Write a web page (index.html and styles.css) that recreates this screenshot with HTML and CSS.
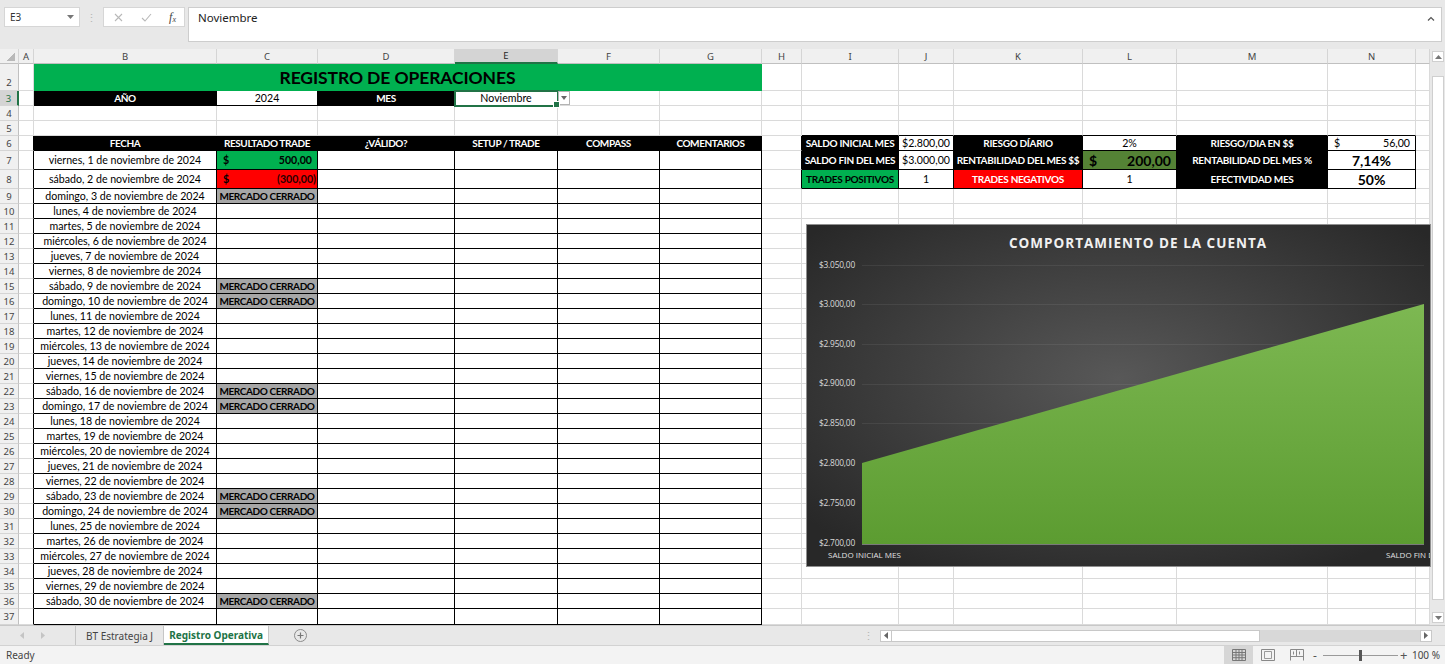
FILE: index.html
```html
<!DOCTYPE html>
<html lang="es">
<head>
<meta charset="utf-8">
<title>Registro Operativa</title>
<link rel="stylesheet" href="styles.css">
</head>
<body>
<div class="app">
  <div class="fbar">
    <div class="namebox"><span>E3</span><svg class="dd" width="7" height="4" viewBox="0 0 7 4"><path d="M0 0h7L3.5 4z" fill="#777"/></svg></div>
    <div class="grip">⋮</div>
    <div class="fxbox">
      <svg width="9" height="9" viewBox="0 0 9 9"><path d="M1 1l7 7M8 1L1 8" stroke="#b8b8b8" stroke-width="1.1" fill="none"/></svg>
      <svg width="11" height="9" viewBox="0 0 11 9"><path d="M1 5l3 3 6-7" stroke="#b8b8b8" stroke-width="1.1" fill="none"/></svg>
      <span class="fx">f<sub>x</sub></span>
    </div>
    <div class="formula"><span>Noviembre</span><svg class="caret" width="8" height="5" viewBox="0 0 8 5"><path d="M1 4.5L4 1.5 7 4.5" stroke="#555" stroke-width="1.2" fill="none"/></svg></div>
  </div>

  <div class="sheetwrap">
    <div class="sheet">
      <!-- column headers -->
      <span class="h corner"></span><span class="h">A</span><span class="h">B</span><span class="h">C</span><span class="h">D</span><span class="h hsel">E</span><span class="h">F</span><span class="h">G</span><span class="h">H</span><span class="h">I</span><span class="h">J</span><span class="h">K</span><span class="h">L</span><span class="h">M</span><span class="h">N</span><span class="h"></span>
      <!-- row 2 -->
      <span class="r rb">2</span><span class="e"></span><span class="title">REGISTRO DE OPERACIONES</span><span class="e"></span><span class="e"></span><span class="e"></span><span class="e"></span><span class="e"></span><span class="e"></span><span class="e"></span><span class="e"></span>
      <!-- row 3 -->
      <span class="r rsel">3</span><span class="e"></span><span class="k">AÑO</span><span class="s">2024</span><span class="k">MES</span><span class="s sel">Noviembre<span class="ddbtn"><svg width="6" height="4" viewBox="0 0 6 4"><path d="M0 0h6L3 4z" fill="#666"/></svg></span></span><span class="e"></span><span class="e"></span><span class="e"></span><span class="e"></span><span class="e"></span><span class="e"></span><span class="e"></span><span class="e"></span><span class="e"></span><span class="e"></span>
      <!-- row 4 -->
      <span class="r">4</span><span class="e"></span><span class="e"></span><span class="e"></span><span class="e"></span><span class="e"></span><span class="e"></span><span class="e"></span><span class="e"></span><span class="e"></span><span class="e"></span><span class="e"></span><span class="e"></span><span class="e"></span><span class="e"></span><span class="e"></span>
      <!-- row 5 -->
      <span class="r">5</span><span class="e"></span><span class="e"></span><span class="e"></span><span class="e"></span><span class="e"></span><span class="e"></span><span class="e"></span><span class="e"></span><span class="e bb"></span><span class="e bb"></span><span class="e bb"></span><span class="e bb"></span><span class="e bb"></span><span class="e bb"></span><span class="e"></span>
      <!-- row 6 -->
      <span class="r">6</span><span class="e ab"></span><span class="k">FECHA</span><span class="k">RESULTADO TRADE</span><span class="k">¿VÁLIDO?</span><span class="k">SETUP / TRADE</span><span class="k">COMPASS</span><span class="k">COMENTARIOS</span><span class="e ab"></span><span class="k st">SALDO INICIAL MES</span><span class="s">$2.800,00</span><span class="k st">RIESGO DÍARIO</span><span class="s">2%</span><span class="k st">RIESGO/DIA EN $$</span><span class="s mn"><span>$</span><span>56,00</span></span><span class="e"></span>
      <!-- row 7 -->
      <span class="r">7</span><span class="e ab"></span><span class="s">viernes, 1 de noviembre de 2024</span><span class="s mn gn bold"><span>$</span><span>500,00</span></span><span class="s"></span><span class="s"></span><span class="s"></span><span class="s"></span><span class="e ab"></span><span class="k st">SALDO FIN DEL MES</span><span class="s">$3.000,00</span><span class="k st">RENTABILIDAD DEL MES $$</span><span class="s mn dg big"><span>$</span><span>200,00</span></span><span class="k st">RENTABILIDAD DEL MES %</span><span class="s big">7,14%</span><span class="e"></span>
      <!-- row 8 -->
      <span class="r">8</span><span class="e ab"></span><span class="s">sábado, 2 de noviembre de 2024</span><span class="s mn rd bold"><span>$</span><span class="neg">(300,00)</span></span><span class="s"></span><span class="s"></span><span class="s"></span><span class="s"></span><span class="e ab"></span><span class="s st gn bold">TRADES POSITIVOS</span><span class="s">1</span><span class="s st rd wt bold">TRADES NEGATIVOS</span><span class="s">1</span><span class="k st">EFECTIVIDAD MES</span><span class="s big">50%</span><span class="e"></span>
      <!-- row 9 -->
      <span class="r">9</span><span class="e ab"></span><span class="s">domingo, 3 de noviembre de 2024</span><span class="s mc">MERCADO CERRADO</span><span class="s"></span><span class="s"></span><span class="s"></span><span class="s"></span><span class="e"></span><span class="e"></span><span class="e"></span><span class="e"></span><span class="e"></span><span class="e"></span><span class="e"></span><span class="e"></span>
      <!-- row 10 -->
      <span class="r">10</span><span class="e ab"></span><span class="s">lunes, 4 de noviembre de 2024</span><span class="s"></span><span class="s"></span><span class="s"></span><span class="s"></span><span class="s"></span><span class="e"></span><span class="e"></span><span class="e"></span><span class="e"></span><span class="e"></span><span class="e"></span><span class="e"></span><span class="e"></span>
      <!-- row 11 -->
      <span class="r">11</span><span class="e ab"></span><span class="s">martes, 5 de noviembre de 2024</span><span class="s"></span><span class="s"></span><span class="s"></span><span class="s"></span><span class="s"></span><span class="e"></span><span class="e"></span><span class="e"></span><span class="e"></span><span class="e"></span><span class="e"></span><span class="e"></span><span class="e"></span>
      <!-- row 12 -->
      <span class="r">12</span><span class="e ab"></span><span class="s">miércoles, 6 de noviembre de 2024</span><span class="s"></span><span class="s"></span><span class="s"></span><span class="s"></span><span class="s"></span><span class="e"></span><span class="e"></span><span class="e"></span><span class="e"></span><span class="e"></span><span class="e"></span><span class="e"></span><span class="e"></span>
      <!-- row 13 -->
      <span class="r">13</span><span class="e ab"></span><span class="s">jueves, 7 de noviembre de 2024</span><span class="s"></span><span class="s"></span><span class="s"></span><span class="s"></span><span class="s"></span><span class="e"></span><span class="e"></span><span class="e"></span><span class="e"></span><span class="e"></span><span class="e"></span><span class="e"></span><span class="e"></span>
      <!-- row 14 -->
      <span class="r">14</span><span class="e ab"></span><span class="s">viernes, 8 de noviembre de 2024</span><span class="s"></span><span class="s"></span><span class="s"></span><span class="s"></span><span class="s"></span><span class="e"></span><span class="e"></span><span class="e"></span><span class="e"></span><span class="e"></span><span class="e"></span><span class="e"></span><span class="e"></span>
      <!-- row 15 -->
      <span class="r">15</span><span class="e ab"></span><span class="s">sábado, 9 de noviembre de 2024</span><span class="s mc">MERCADO CERRADO</span><span class="s"></span><span class="s"></span><span class="s"></span><span class="s"></span><span class="e"></span><span class="e"></span><span class="e"></span><span class="e"></span><span class="e"></span><span class="e"></span><span class="e"></span><span class="e"></span>
      <!-- row 16 -->
      <span class="r">16</span><span class="e ab"></span><span class="s">domingo, 10 de noviembre de 2024</span><span class="s mc">MERCADO CERRADO</span><span class="s"></span><span class="s"></span><span class="s"></span><span class="s"></span><span class="e"></span><span class="e"></span><span class="e"></span><span class="e"></span><span class="e"></span><span class="e"></span><span class="e"></span><span class="e"></span>
      <!-- row 17 -->
      <span class="r">17</span><span class="e ab"></span><span class="s">lunes, 11 de noviembre de 2024</span><span class="s"></span><span class="s"></span><span class="s"></span><span class="s"></span><span class="s"></span><span class="e"></span><span class="e"></span><span class="e"></span><span class="e"></span><span class="e"></span><span class="e"></span><span class="e"></span><span class="e"></span>
      <!-- row 18 -->
      <span class="r">18</span><span class="e ab"></span><span class="s">martes, 12 de noviembre de 2024</span><span class="s"></span><span class="s"></span><span class="s"></span><span class="s"></span><span class="s"></span><span class="e"></span><span class="e"></span><span class="e"></span><span class="e"></span><span class="e"></span><span class="e"></span><span class="e"></span><span class="e"></span>
      <!-- row 19 -->
      <span class="r">19</span><span class="e ab"></span><span class="s">miércoles, 13 de noviembre de 2024</span><span class="s"></span><span class="s"></span><span class="s"></span><span class="s"></span><span class="s"></span><span class="e"></span><span class="e"></span><span class="e"></span><span class="e"></span><span class="e"></span><span class="e"></span><span class="e"></span><span class="e"></span>
      <!-- row 20 -->
      <span class="r">20</span><span class="e ab"></span><span class="s">jueves, 14 de noviembre de 2024</span><span class="s"></span><span class="s"></span><span class="s"></span><span class="s"></span><span class="s"></span><span class="e"></span><span class="e"></span><span class="e"></span><span class="e"></span><span class="e"></span><span class="e"></span><span class="e"></span><span class="e"></span>
      <!-- row 21 -->
      <span class="r">21</span><span class="e ab"></span><span class="s">viernes, 15 de noviembre de 2024</span><span class="s"></span><span class="s"></span><span class="s"></span><span class="s"></span><span class="s"></span><span class="e"></span><span class="e"></span><span class="e"></span><span class="e"></span><span class="e"></span><span class="e"></span><span class="e"></span><span class="e"></span>
      <!-- row 22 -->
      <span class="r">22</span><span class="e ab"></span><span class="s">sábado, 16 de noviembre de 2024</span><span class="s mc">MERCADO CERRADO</span><span class="s"></span><span class="s"></span><span class="s"></span><span class="s"></span><span class="e"></span><span class="e"></span><span class="e"></span><span class="e"></span><span class="e"></span><span class="e"></span><span class="e"></span><span class="e"></span>
      <!-- row 23 -->
      <span class="r">23</span><span class="e ab"></span><span class="s">domingo, 17 de noviembre de 2024</span><span class="s mc">MERCADO CERRADO</span><span class="s"></span><span class="s"></span><span class="s"></span><span class="s"></span><span class="e"></span><span class="e"></span><span class="e"></span><span class="e"></span><span class="e"></span><span class="e"></span><span class="e"></span><span class="e"></span>
      <!-- row 24 -->
      <span class="r">24</span><span class="e ab"></span><span class="s">lunes, 18 de noviembre de 2024</span><span class="s"></span><span class="s"></span><span class="s"></span><span class="s"></span><span class="s"></span><span class="e"></span><span class="e"></span><span class="e"></span><span class="e"></span><span class="e"></span><span class="e"></span><span class="e"></span><span class="e"></span>
      <!-- row 25 -->
      <span class="r">25</span><span class="e ab"></span><span class="s">martes, 19 de noviembre de 2024</span><span class="s"></span><span class="s"></span><span class="s"></span><span class="s"></span><span class="s"></span><span class="e"></span><span class="e"></span><span class="e"></span><span class="e"></span><span class="e"></span><span class="e"></span><span class="e"></span><span class="e"></span>
      <!-- row 26 -->
      <span class="r">26</span><span class="e ab"></span><span class="s">miércoles, 20 de noviembre de 2024</span><span class="s"></span><span class="s"></span><span class="s"></span><span class="s"></span><span class="s"></span><span class="e"></span><span class="e"></span><span class="e"></span><span class="e"></span><span class="e"></span><span class="e"></span><span class="e"></span><span class="e"></span>
      <!-- row 27 -->
      <span class="r">27</span><span class="e ab"></span><span class="s">jueves, 21 de noviembre de 2024</span><span class="s"></span><span class="s"></span><span class="s"></span><span class="s"></span><span class="s"></span><span class="e"></span><span class="e"></span><span class="e"></span><span class="e"></span><span class="e"></span><span class="e"></span><span class="e"></span><span class="e"></span>
      <!-- row 28 -->
      <span class="r">28</span><span class="e ab"></span><span class="s">viernes, 22 de noviembre de 2024</span><span class="s"></span><span class="s"></span><span class="s"></span><span class="s"></span><span class="s"></span><span class="e"></span><span class="e"></span><span class="e"></span><span class="e"></span><span class="e"></span><span class="e"></span><span class="e"></span><span class="e"></span>
      <!-- row 29 -->
      <span class="r">29</span><span class="e ab"></span><span class="s">sábado, 23 de noviembre de 2024</span><span class="s mc">MERCADO CERRADO</span><span class="s"></span><span class="s"></span><span class="s"></span><span class="s"></span><span class="e"></span><span class="e"></span><span class="e"></span><span class="e"></span><span class="e"></span><span class="e"></span><span class="e"></span><span class="e"></span>
      <!-- row 30 -->
      <span class="r">30</span><span class="e ab"></span><span class="s">domingo, 24 de noviembre de 2024</span><span class="s mc">MERCADO CERRADO</span><span class="s"></span><span class="s"></span><span class="s"></span><span class="s"></span><span class="e"></span><span class="e"></span><span class="e"></span><span class="e"></span><span class="e"></span><span class="e"></span><span class="e"></span><span class="e"></span>
      <!-- row 31 -->
      <span class="r">31</span><span class="e ab"></span><span class="s">lunes, 25 de noviembre de 2024</span><span class="s"></span><span class="s"></span><span class="s"></span><span class="s"></span><span class="s"></span><span class="e"></span><span class="e"></span><span class="e"></span><span class="e"></span><span class="e"></span><span class="e"></span><span class="e"></span><span class="e"></span>
      <!-- row 32 -->
      <span class="r">32</span><span class="e ab"></span><span class="s">martes, 26 de noviembre de 2024</span><span class="s"></span><span class="s"></span><span class="s"></span><span class="s"></span><span class="s"></span><span class="e"></span><span class="e"></span><span class="e"></span><span class="e"></span><span class="e"></span><span class="e"></span><span class="e"></span><span class="e"></span>
      <!-- row 33 -->
      <span class="r">33</span><span class="e ab"></span><span class="s">miércoles, 27 de noviembre de 2024</span><span class="s"></span><span class="s"></span><span class="s"></span><span class="s"></span><span class="s"></span><span class="e"></span><span class="e"></span><span class="e"></span><span class="e"></span><span class="e"></span><span class="e"></span><span class="e"></span><span class="e"></span>
      <!-- row 34 -->
      <span class="r">34</span><span class="e ab"></span><span class="s">jueves, 28 de noviembre de 2024</span><span class="s"></span><span class="s"></span><span class="s"></span><span class="s"></span><span class="s"></span><span class="e"></span><span class="e"></span><span class="e"></span><span class="e"></span><span class="e"></span><span class="e"></span><span class="e"></span><span class="e"></span>
      <!-- row 35 -->
      <span class="r">35</span><span class="e ab"></span><span class="s">viernes, 29 de noviembre de 2024</span><span class="s"></span><span class="s"></span><span class="s"></span><span class="s"></span><span class="s"></span><span class="e"></span><span class="e"></span><span class="e"></span><span class="e"></span><span class="e"></span><span class="e"></span><span class="e"></span><span class="e"></span>
      <!-- row 36 -->
      <span class="r">36</span><span class="e ab"></span><span class="s">sábado, 30 de noviembre de 2024</span><span class="s mc">MERCADO CERRADO</span><span class="s"></span><span class="s"></span><span class="s"></span><span class="s"></span><span class="e"></span><span class="e"></span><span class="e"></span><span class="e"></span><span class="e"></span><span class="e"></span><span class="e"></span><span class="e"></span>
      <!-- row 37 -->
      <span class="r">37</span><span class="e ab"></span><span class="s"></span><span class="s"></span><span class="s"></span><span class="s"></span><span class="s"></span><span class="s"></span><span class="e"></span><span class="e"></span><span class="e"></span><span class="e"></span><span class="e"></span><span class="e"></span><span class="e"></span><span class="e"></span>
    </div>

    <div class="vscroll">
      <span class="sbtn"><svg width="7" height="4" viewBox="0 0 7 4"><path d="M0 4h7L3.5 0z" fill="#777"/></svg></span>
      <span class="vthumb"></span>
      <span class="sbtn"><svg width="7" height="4" viewBox="0 0 7 4"><path d="M0 0h7L3.5 4z" fill="#777"/></svg></span>
    </div>

    <div class="chart">
      <svg width="623" height="341" viewBox="0 0 623 341">
        <defs>
          <radialGradient id="cbg" cx="50%" cy="45%" r="65%">
            <stop offset="0" stop-color="#585858"/>
            <stop offset="1" stop-color="#282828"/>
          </radialGradient>
          <linearGradient id="area" x1="0" y1="0" x2="0" y2="1">
            <stop offset="0" stop-color="#7db852"/>
            <stop offset="1" stop-color="#5c9c31"/>
          </linearGradient>
        </defs>
        <rect width="623" height="341" fill="url(#cbg)"/>
        <text class="ctitle" x="331" y="23" text-anchor="middle">COMPORTAMIENTO DE LA CUENTA</text>
        <g class="grid">
          <line x1="55" y1="40.5" x2="617" y2="40.5"/>
          <line x1="55" y1="79.5" x2="617" y2="79.5"/>
          <line x1="55" y1="119.5" x2="617" y2="119.5"/>
          <line x1="55" y1="159.5" x2="617" y2="159.5"/>
          <line x1="55" y1="198.5" x2="617" y2="198.5"/>
          <line x1="55" y1="238.5" x2="617" y2="238.5"/>
          <line x1="55" y1="278.5" x2="617" y2="278.5"/>
        </g>
        <polygon points="55,238 617,79 617,319 55,319" fill="url(#area)"/>
        <line x1="55" y1="319.5" x2="617" y2="319.5" stroke="#7a7a7a"/>
        <g class="ylab">
          <text x="48" y="43">$3.050,00</text>
          <text x="48" y="82">$3.000,00</text>
          <text x="48" y="122">$2.950,00</text>
          <text x="48" y="161">$2.900,00</text>
          <text x="48" y="201">$2.850,00</text>
          <text x="48" y="241">$2.800,00</text>
          <text x="48" y="281">$2.750,00</text>
          <text x="48" y="321">$2.700,00</text>
        </g>
        <g class="xlab">
          <text x="21" y="333">SALDO INICIAL MES</text>
          <text x="579" y="333">SALDO FIN DEL MES</text>
        </g>
      </svg>
    </div>
  </div>

  <div class="tabbar">
    <div class="nav">
      <svg width="4" height="7" viewBox="0 0 4 7"><path d="M4 0v7L0 3.5z" fill="#c4c4c4"/></svg>
      <svg width="4" height="7" viewBox="0 0 4 7"><path d="M0 0v7L4 3.5z" fill="#c4c4c4"/></svg>
    </div>
    <div class="tab">BT Estrategia J</div>
    <div class="tab active">Registro Operativa</div>
    <div class="addsheet"><svg width="13" height="13" viewBox="0 0 13 13"><circle cx="6.5" cy="6.5" r="6" fill="none" stroke="#8a8a8a"/><path d="M6.5 3.5v6M3.5 6.5h6" stroke="#777" stroke-width="1.2"/></svg></div>
    <div class="spacer"></div>
    <div class="hgrip">⋮</div>
    <div class="hscroll">
      <span class="hbtn"><svg width="4" height="7" viewBox="0 0 4 7"><path d="M4 0v7L0 3.5z" fill="#666"/></svg></span>
      <span class="hthumb"></span>
      <span class="htrack"></span>
      <span class="hbtn"><svg width="4" height="7" viewBox="0 0 4 7"><path d="M0 0v7L4 3.5z" fill="#666"/></svg></span>
    </div>
  </div>

  <div class="status">
    <span class="ready">Ready</span>
    <div class="views">
      <span class="view on"><svg width="14" height="12" viewBox="0 0 14 12"><path d="M.5.5h13v11H.5zM.5 3.5h13M.5 6h13M.5 8.7h13M4 .5v11M7 .5v11M10 .5v11" fill="none" stroke="#777"/></svg></span>
      <span class="view"><svg width="14" height="12" viewBox="0 0 14 12"><path d="M.5.5h13v11H.5z" fill="none" stroke="#888"/><path d="M3.5 2.5h7v7h-7z" fill="none" stroke="#999"/></svg></span>
      <span class="view"><svg width="14" height="12" viewBox="0 0 14 12"><path d="M.5 11.5V.5h13v11M.5 7.5h13M6.5.5v7M3.5 2.5v3M9.5 2.5v3" fill="none" stroke="#888"/></svg></span>
    </div>
    <div class="zoom">
      <span class="zm">-</span>
      <span class="slider"><span class="knob"></span></span>
      <span class="zp">+</span>
      <span class="pct">100 %</span>
    </div>
  </div>
</div>
</body>
</html>
```

FILE: styles.css
```css
* { box-sizing: border-box; margin: 0; padding: 0; }
html, body { width: 1445px; height: 664px; overflow: hidden; }
body { background: #e8e8e8; font-family: "Noto Sans", "Open Sans", sans-serif; color: #333; }
.app { display: flex; flex-direction: column; height: 664px; }

/* formula bar */
.fbar { height: 50px; display: flex; align-items: flex-start; padding: 7px 0 0 4px; }
.namebox { width: 76px; height: 20px; background: #fff; border: 1px solid #d6d6d6; display: flex; align-items: center; justify-content: space-between; padding: 0 5px 0 5px; font-size: 10px; color: #333; }
.grip { width: 23px; height: 20px; display: flex; align-items: center; justify-content: center; color: #b5b5b5; font-size: 11px; }
.fxbox { width: 82px; height: 20px; background: #fff; border: 1px solid #d6d6d6; display: flex; align-items: center; justify-content: space-between; padding: 0 8px 0 10px; }
.fx { font-family: "Liberation Serif", serif; font-style: italic; font-size: 12px; color: #444; line-height: 1; }
.fx sub { font-size: 8px; vertical-align: -1px; }
.formula { margin-left: 3px; width: 1254px; height: 35px; background: #fff; border: 1px solid #cdcdcd; padding: 2px 6px 0 9px; font-size: 11.5px; color: #222; display: flex; justify-content: space-between; align-items: flex-start; }
.formula .caret { margin-top: 6px; }

/* sheet */
.sheetwrap { position: relative; display: flex; height: 576px; }
.sheet {
  width: 1430px; height: 576px; overflow: hidden; background: #fff;
  display: grid;
  grid-template-columns: 19px 15px 183px 101px 137px 103px 102px 102px 40px 97px 55px 129px 94px 151px 88px 14px;
  grid-template-rows: 15px 27px 15px 15px 15px 15px 19px 19px repeat(28, 15px) 16px;
  font-family: Lato, "Liberation Sans", sans-serif; font-size: 10.6px; color: #000;
}
.sheet > span { min-width: 0; white-space: nowrap; display: flex; align-items: center; justify-content: center; }

.h { background: #f0f0f0; border-right: 1px solid #d5d5d5; border-bottom: 1px solid #c0c0c0; color: #444; font-family: "Noto Sans", sans-serif; font-size: 9.5px; }
.hsel { background: #d4d4d4; border-bottom: 2px solid #217346; color: #262626; }
.corner { position: relative; }
.corner::after { content: ""; position: absolute; right: 3px; bottom: 2px; width: 9px; height: 9px; background: linear-gradient(135deg, transparent 50%, #b9b9b9 50%); }
.r { background: #f0f0f0; border-right: 1px solid #c0c0c0; border-bottom: 1px solid #d5d5d5; color: #444; font-family: "Noto Sans", sans-serif; font-size: 9.5px; }
.rb { align-items: flex-end !important; padding-bottom: 1px; }
.rsel { background: #d4d4d4; border-right: 2px solid #217346; color: #217346; }

.e { border-right: 1px solid #dadada; border-bottom: 1px solid #dadada; }
.ab { border-right-color: #000; }
.bb { border-bottom-color: #000; }

.title { grid-column: span 6; background: #00b050; border-right: 1px solid #00b050; font-size: 17.5px; font-weight: 700; letter-spacing: -0.1px; }
.k { background: #000; color: #fff; font-weight: 700; font-size: 10px; letter-spacing: -0.4px; border-right: 1px solid #000; border-bottom: 1px solid #000; }
.s { border-right: 1px solid #000; border-bottom: 1px solid #000; }
.st { font-size: 10px; letter-spacing: -0.3px; }
.bold { font-weight: 700; }
.wt { color: #fff; }
.mc { background: #a6a6a6; font-weight: 700; font-size: 10px; letter-spacing: -0.4px; }
.mn { justify-content: space-between !important; padding: 0 5px 0 6px; }
.neg { margin-right: -4px; color: #2a0000; }
.gn { background: #00b050; }
.rd { background: #ff0000; }
.dg { background: #548235; }
.big { font-size: 14px; font-weight: 700; letter-spacing: 0; }

.sel { position: relative; outline: 2px solid #217346; outline-offset: -1px; z-index: 2; }
.sel::after { content: ""; position: absolute; right: -3px; bottom: -3px; width: 5px; height: 5px; background: #217346; border: 1px solid #fff; }
.ddbtn { position: absolute; left: calc(100% + 1px); top: 0; width: 12px; height: 14px; background: #fff; border: 1px solid #b4b4b4; display: flex; align-items: center; justify-content: center; }

/* vertical scrollbar */
.vscroll { width: 15px; background: #e8e8e8; display: flex; flex-direction: column; padding: 2px 1px 2px 2px; }
.sbtn { height: 11px; display: flex; align-items: center; justify-content: center; background: #fff; border: 1px solid #cfcfcf; }
.vthumb { margin-top: 14px; height: 524px; background: #fff; border: 1px solid #cfcfcf; }
.vscroll .sbtn:last-child { margin-top: auto; }

/* chart */
.chart { position: absolute; left: 807px; top: 176px; width: 623px; height: 341px; overflow: hidden; box-shadow: 0 0 0 1px #8f8f8f; }
.chart svg { display: block; }
.ctitle { font-family: "Open Sans", sans-serif; font-weight: 700; font-size: 13.5px; letter-spacing: 1px; fill: #f0f0f0; }
.grid line { stroke: rgba(255, 255, 255, 0.07); stroke-width: 1; }
.ylab text { font-family: "Open Sans", sans-serif; font-size: 8.4px; letter-spacing: -0.2px; fill: #d9d9d9; text-anchor: end; }
.xlab text { font-family: "Open Sans", sans-serif; font-size: 8px; fill: #e0e0e0; }

/* tab bar */
.tabbar { height: 20px; display: flex; align-items: stretch; background: #e8e8e8; border-top: 1px solid #c8c8c8; }
.nav { width: 76px; display: flex; align-items: center; gap: 17px; padding-left: 20px; border-right: 1px solid #c6c6c6; }
.tab { display: flex; align-items: center; padding: 0 10px 0 10px; font-size: 10px; color: #444; border-right: 1px solid #c6c6c6; }
.tab.active { width: 105px; justify-content: center; background: #fff; color: #217346; font-weight: 700; border-bottom: 2px solid #217346; padding: 1px 0 0; }
.addsheet { width: 62px; display: flex; align-items: center; justify-content: center; }
.spacer { flex: 1; }
.hgrip { width: 17px; display: flex; align-items: center; color: #b5b5b5; font-size: 11px; }
.hscroll { width: 552px; margin-right: 13px; display: flex; align-items: center; }
.hbtn { width: 12px; height: 12px; background: #fff; border: 1px solid #c8c8c8; display: flex; align-items: center; justify-content: center; }
.hthumb { width: 368px; height: 12px; background: #fff; border: 1px solid #c8c8c8; border-left: none; }
.htrack { flex: 1; height: 12px; background: #d8d8d8; }

/* status bar */
.status { height: 19px; display: flex; align-items: stretch; background: #f3f3f3; border-top: 1px solid #d2d2d2; font-size: 10px; color: #444; }
.ready { padding-left: 6px; display: flex; align-items: center; flex: 1; }
.views { display: flex; align-items: stretch; width: 87px; }
.view { width: 29px; display: flex; align-items: center; justify-content: center; }
.view.on { background: #d6d6d6; }
.zoom { width: 134px; display: flex; align-items: center; padding: 0 5px 0 2px; }
.zm { width: 7px; font-size: 12px; color: #555; }
.slider { position: relative; width: 75px; height: 1px; background: #9a9a9a; margin: 0 2px 0 3px; }
.knob { position: absolute; left: 36px; top: -5px; width: 3px; height: 11px; background: #555; }
.zp { font-size: 13px; color: #555; width: 9px; }
.pct { margin-left: auto; font-size: 10px; color: #444; }
```
